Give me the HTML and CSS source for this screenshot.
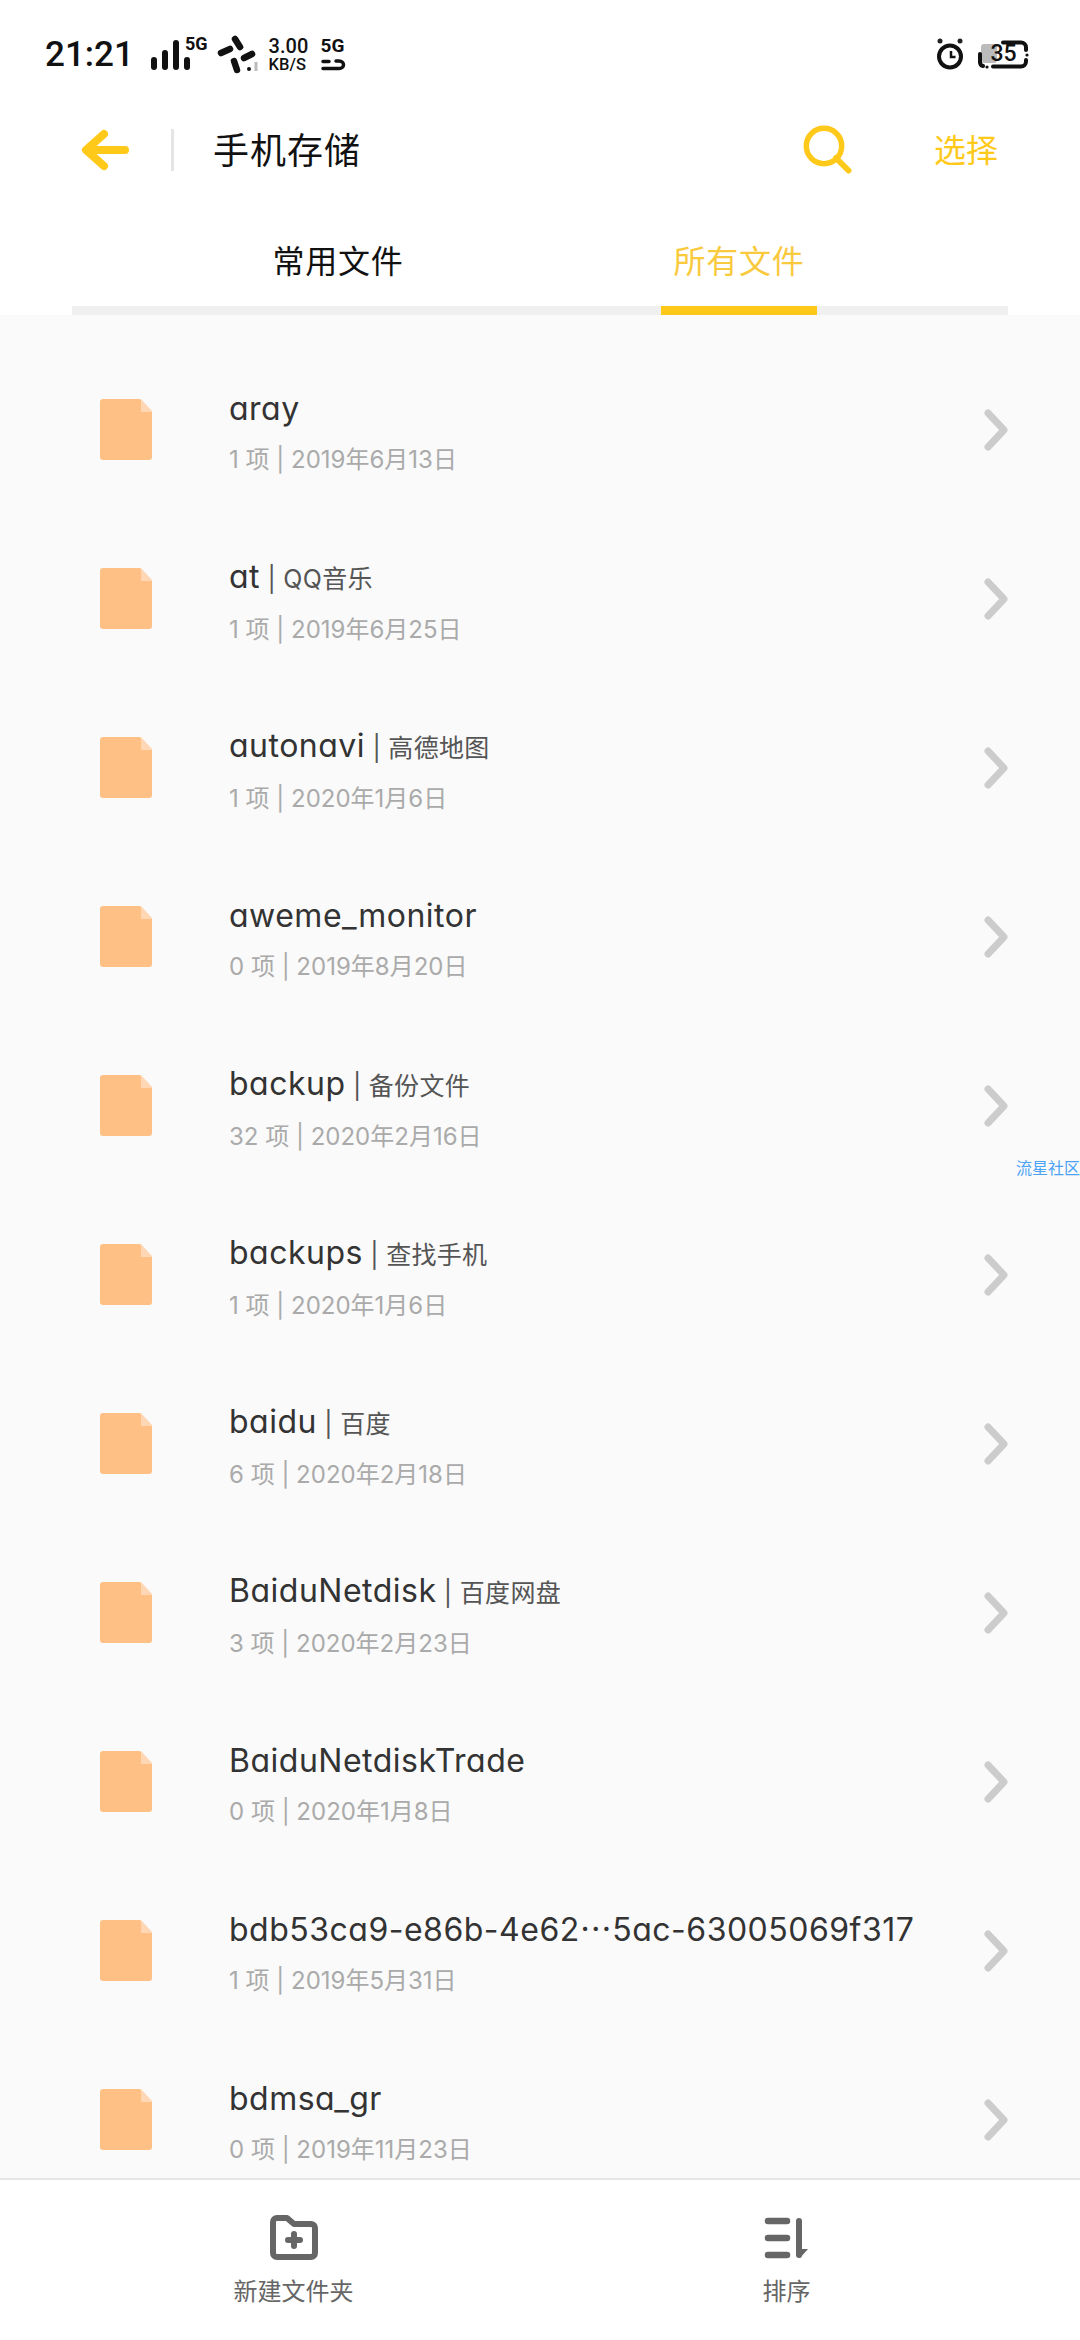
FILE: index.html
```html
<!DOCTYPE html>
<html lang="zh-CN">
<head>
    <meta charset="UTF-8">
    <meta name="viewport" content="width=device-width, initial-scale=1.0">
    <title>手机存储</title>
    <link rel="stylesheet" href="styles.css">
</head>
<body>

<svg class="defs" width="0" height="0">
    <symbol id="folder" viewBox="0 0 52 61">
        <path d="M3 0H40L52 13V58a3 3 0 0 1-3 3H3a3 3 0 0 1-3-3V3a3 3 0 0 1 3-3Z" fill="#ffc085"/>
        <path d="M41 0L52 12V13H41Z" fill="#ffd7b5"/>
    </symbol>
    <symbol id="chevron" viewBox="0 0 24 42">
        <path d="M4 4L20 21L4 38" fill="none" stroke="#ccc" stroke-width="7" stroke-linecap="round" stroke-linejoin="round"/>
    </symbol>
</svg>

<div class="status-bar">
    <span class="time">21:21</span>
    <svg class="signal" width="58" height="36" viewBox="0 0 58 36">
        <rect x="1" y="22" width="6" height="13" rx="3"/>
        <rect x="12" y="15" width="6" height="20" rx="3"/>
        <rect x="23" y="5" width="6" height="30" rx="3"/>
        <rect x="34" y="22" width="6" height="13" rx="3"/>
    </svg>
    <span class="net-label">5G</span>
    <svg class="fan" width="41" height="40" viewBox="0 0 41 40">
        <g stroke="#111" stroke-width="6.5" stroke-linecap="round">
            <path d="M18 4L23 12"/>
            <path d="M4 18L13 14"/>
            <path d="M27 23L35 19"/>
            <path d="M17 26L20 35"/>
        </g>
        <circle cx="32" cy="34" r="2" fill="#111"/>
        <rect x="37.5" y="27" width="3" height="9" fill="#bbb"/>
    </svg>
    <div class="speed">
        <span class="speed-num">3.00</span>
        <span class="speed-unit">KB/S</span>
    </div>
    <div class="sim">
        <span class="net-label">5G</span>
        <svg width="25" height="12" viewBox="0 0 25 12">
            <path d="M2 2.5H8M2 9.5H18C24 9.5 24 2 18 2H15" fill="none" stroke="#111" stroke-width="3.5" stroke-linecap="round"/>
        </svg>
    </div>
    <div class="status-right">
        <svg width="30" height="36" viewBox="0 0 30 36">
            <circle cx="16" cy="21.5" r="11" fill="none" stroke="#111" stroke-width="4"/>
            <circle cx="6" cy="6" r="2.5" fill="#222"/>
            <circle cx="26" cy="6" r="2.5" fill="#222"/>
            <path d="M17 16V22H21.5" fill="none" stroke="#111" stroke-width="2.5"/>
        </svg>
        <div class="battery">
            <svg width="53" height="29" viewBox="0 0 53 29">
                <rect x="4" y="4" width="16" height="19" rx="3" fill="#bbb"/>
                <path d="M26 2.5H44a5 5 0 0 1 5 5V10M16 26.5H44a5 5 0 0 0 5-5V20M3 14V22a4 4 0 0 0 3 4" fill="none" stroke="#111" stroke-width="4" stroke-linecap="round"/>
                <circle cx="50" cy="15" r="1.6" fill="#111"/>
                <circle cx="10" cy="27" r="1.6" fill="#111"/>
            </svg>
            <span class="battery-num">35</span>
        </div>
    </div>
</div>

<header class="title-bar">
    <svg class="back" width="48" height="42" viewBox="0 0 48 42">
        <path d="M44 21H6M23 5L5 21L23 37" fill="none" stroke="#ffc91a" stroke-width="8" stroke-linecap="round" stroke-linejoin="round"/>
    </svg>
    <span class="divider"></span>
    <h1>手机存储</h1>
    <svg class="search" width="50" height="50" viewBox="0 0 50 50">
        <circle cx="21" cy="21" r="17.7" fill="none" stroke="#ffc91a" stroke-width="5.5"/>
        <path d="M33 33L45.5 45.5" stroke="#ffc91a" stroke-width="6" stroke-linecap="round"/>
    </svg>
    <span class="select">选择</span>
</header>

<nav class="tabs">
    <div class="tab">常用文件</div>
    <div class="tab active">所有文件</div>
</nav>

<main class="file-list">
    <div class="row">
        <svg class="folder"><use href="#folder"/></svg>
        <div class="info">
            <div class="name">aray</div>
            <div class="meta">1 项 | 2019年6月13日</div>
        </div>
        <svg class="chevron"><use href="#chevron"/></svg>
    </div>
    <div class="row">
        <svg class="folder"><use href="#folder"/></svg>
        <div class="info">
            <div class="name">at<span class="alias"> | QQ音乐</span></div>
            <div class="meta">1 项 | 2019年6月25日</div>
        </div>
        <svg class="chevron"><use href="#chevron"/></svg>
    </div>
    <div class="row">
        <svg class="folder"><use href="#folder"/></svg>
        <div class="info">
            <div class="name">autonavi<span class="alias"> | 高德地图</span></div>
            <div class="meta">1 项 | 2020年1月6日</div>
        </div>
        <svg class="chevron"><use href="#chevron"/></svg>
    </div>
    <div class="row">
        <svg class="folder"><use href="#folder"/></svg>
        <div class="info">
            <div class="name">aweme_monitor</div>
            <div class="meta">0 项 | 2019年8月20日</div>
        </div>
        <svg class="chevron"><use href="#chevron"/></svg>
    </div>
    <div class="row">
        <svg class="folder"><use href="#folder"/></svg>
        <div class="info">
            <div class="name">backup<span class="alias"> | 备份文件</span></div>
            <div class="meta">32 项 | 2020年2月16日</div>
        </div>
        <svg class="chevron"><use href="#chevron"/></svg>
    </div>
    <div class="row">
        <svg class="folder"><use href="#folder"/></svg>
        <div class="info">
            <div class="name">backups<span class="alias"> | 查找手机</span></div>
            <div class="meta">1 项 | 2020年1月6日</div>
        </div>
        <svg class="chevron"><use href="#chevron"/></svg>
    </div>
    <div class="row">
        <svg class="folder"><use href="#folder"/></svg>
        <div class="info">
            <div class="name">baidu<span class="alias"> | 百度</span></div>
            <div class="meta">6 项 | 2020年2月18日</div>
        </div>
        <svg class="chevron"><use href="#chevron"/></svg>
    </div>
    <div class="row">
        <svg class="folder"><use href="#folder"/></svg>
        <div class="info">
            <div class="name">BaiduNetdisk<span class="alias"> | 百度网盘</span></div>
            <div class="meta">3 项 | 2020年2月23日</div>
        </div>
        <svg class="chevron"><use href="#chevron"/></svg>
    </div>
    <div class="row">
        <svg class="folder"><use href="#folder"/></svg>
        <div class="info">
            <div class="name">BaiduNetdiskTrade</div>
            <div class="meta">0 项 | 2020年1月8日</div>
        </div>
        <svg class="chevron"><use href="#chevron"/></svg>
    </div>
    <div class="row">
        <svg class="folder"><use href="#folder"/></svg>
        <div class="info">
            <div class="name">bdb53ca9-e86b-4e62⋯5ac-63005069f317</div>
            <div class="meta">1 项 | 2019年5月31日</div>
        </div>
        <svg class="chevron"><use href="#chevron"/></svg>
    </div>
    <div class="row">
        <svg class="folder"><use href="#folder"/></svg>
        <div class="info">
            <div class="name">bdmsa_gr</div>
            <div class="meta">0 项 | 2019年11月23日</div>
        </div>
        <svg class="chevron"><use href="#chevron"/></svg>
    </div>
</main>

<div class="watermark">流星社区</div>

<footer class="bottom-bar">
    <div class="action">
        <svg width="48" height="46" viewBox="0 0 48 46">
            <path d="M3 7a4 4 0 0 1 4-4H17l7 6H41a4 4 0 0 1 4 4V38a4 4 0 0 1-4 4H7a4 4 0 0 1-4-4Z" fill="none" stroke="#666" stroke-width="6" stroke-linejoin="round"/>
            <path d="M24 19V31M18 25H30" stroke="#666" stroke-width="6" stroke-linecap="round"/>
        </svg>
        <span>新建文件夹</span>
    </div>
    <div class="action">
        <svg width="48" height="46" viewBox="0 0 48 46">
            <path d="M5 6H24M5 23H24M5 40H24" stroke="#666" stroke-width="6.5" stroke-linecap="round"/>
            <path d="M36 6V40" stroke="#666" stroke-width="6" stroke-linecap="round"/>
            <path d="M38 34H45L37 43H36Z" fill="#666"/>
        </svg>
        <span>排序</span>
    </div>
</footer>

</body>
</html>
```

FILE: styles.css
```css
* {
    box-sizing: border-box;
}
html, body {
    margin: 0;
    padding: 0;
}
body {
    position: relative;
    width: 1080px;
    height: 2340px;
    overflow: hidden;
    display: flex;
    flex-direction: column;
    background-color: white;
    font-family: Inter, "Noto Sans CJK SC", sans-serif;
    font-feature-settings: "cv11";
}
.defs {
    position: absolute;
}

/* status bar */
.status-bar {
    height: 110px;
    padding: 35px 50px 0 45px;
    display: flex;
    align-items: flex-start;
    color: #111;
}
.time {
    font-family: Roboto, sans-serif;
    font-size: 35px;
    font-weight: 500;
    line-height: 38px;
    margin-top: 1px;
    width: 105px;
}
.signal {
    fill: #111;
}
.net-label {
    font-family: Roboto, sans-serif;
    font-size: 18px;
    font-weight: 700;
    line-height: 18px;
    margin-left: -23px;
}
.fan {
    margin-left: 9px;
}
.speed {
    display: flex;
    flex-direction: column;
    font-family: Roboto, sans-serif;
    font-weight: 500;
    margin-left: 11px;
    width: 52px;
}
.speed-num {
    font-size: 20px;
    line-height: 22px;
}
.speed-unit {
    font-size: 16.5px;
    line-height: 15px;
}
.sim {
    display: flex;
    flex-direction: column;
    gap: 4px;
    padding-top: 2px;
}
.sim .net-label {
    margin-left: 0;
    font-size: 19px;
}
.status-right {
    margin-left: auto;
    display: flex;
    gap: 13px;
}
.battery {
    position: relative;
    width: 53px;
    height: 29px;
    margin-top: 5px;
}
.battery-num {
    position: absolute;
    left: 0;
    right: 0;
    top: 0;
    font-family: Roboto, sans-serif;
    font-size: 23px;
    font-weight: 500;
    line-height: 28px;
    text-align: center;
}

/* title bar */
.title-bar {
    height: 80px;
    padding: 0 82px 0 81px;
    display: flex;
    align-items: center;
}
.divider {
    width: 3px;
    height: 42px;
    margin-left: 42px;
    background-color: #e5e5e5;
}
h1 {
    margin: 0 0 4px 39px;
    font-size: 36px;
    font-weight: 400;
    letter-spacing: 1px;
    color: #111;
}
.search {
    margin-left: auto;
}
.select {
    margin: 0 0 4px 81px;
    font-size: 32px;
    color: #ffc91a;
}

/* tabs */
.tabs {
    height: 125px;
    margin: 0 72px;
    padding-left: 188px;
    display: flex;
    gap: 245px;
    align-items: flex-end;
    border-bottom: 9px solid #f0f0f0;
}
.tab {
    width: 156px;
    height: 93px;
    margin-bottom: -9px;
    padding-top: 17px;
    font-size: 32px;
    line-height: 46px;
    letter-spacing: 0.8px;
    white-space: nowrap;
    color: #111;
    display: flex;
    justify-content: center;
}
.tab.active {
    color: #f9c93e;
    border-bottom: 9px solid #ffc91a;
}

/* list */
.file-list {
    flex: 1;
    min-height: 0;
    overflow: hidden;
    padding-top: 30px;
    background-color: #fafafa;
}
.row {
    height: 169px;
    padding: 0 72px 0 100px;
    display: flex;
    align-items: center;
}
.folder {
    width: 52px;
    height: 61px;
    flex-shrink: 0;
}
.info {
    flex: 1;
    margin: 6px 0 0 77px;
}
.name {
    font-size: 32px;
    line-height: 42px;
    letter-spacing: 0.5px;
    color: #333;
    white-space: nowrap;
}
.alias {
    font-size: 25px;
    letter-spacing: 0.3px;
    color: #555;
}
.meta {
    margin-top: 13px;
    font-size: 24px;
    line-height: 34px;
    color: #aaa;
    white-space: nowrap;
}
.chevron {
    width: 24px;
    height: 42px;
    flex-shrink: 0;
}

.watermark {
    position: absolute;
    right: 0;
    top: 1158px;
    font-size: 16px;
    line-height: 20px;
    color: #4aa3f5;
}

/* bottom bar */
.bottom-bar {
    height: 162px;
    border-top: 2px solid #e6e6e6;
    padding-top: 35px;
    display: flex;
    justify-content: center;
    gap: 333px;
    background-color: white;
}
.action {
    width: 160px;
    display: flex;
    flex-direction: column;
    align-items: center;
    gap: 17px;
    font-size: 24px;
    line-height: 28px;
    color: #666;
}
```
